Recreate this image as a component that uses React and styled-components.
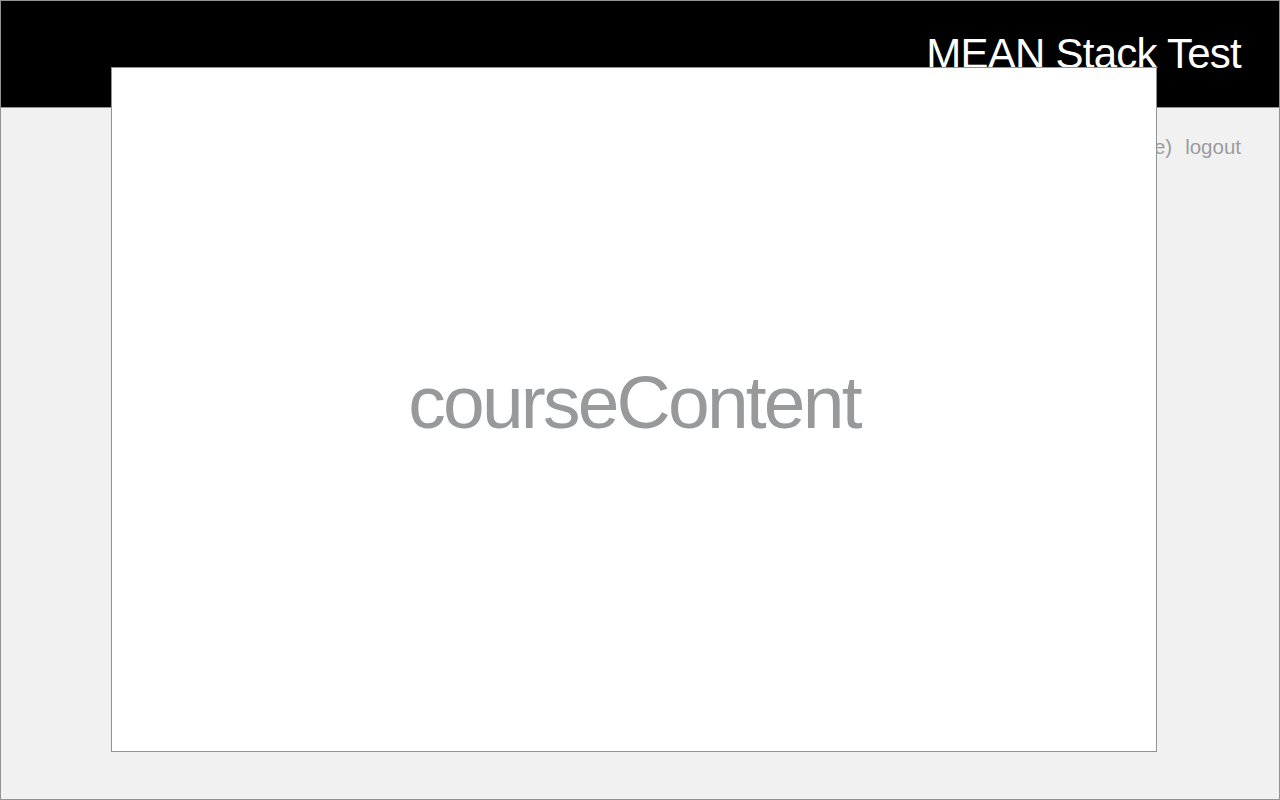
import React from 'react';
import styled, { createGlobalStyle } from 'styled-components';

const GlobalStyle = createGlobalStyle`
  html, body {
    margin: 0;
    padding: 0;
  }
  body {
    font-family: 'Liberation Sans', Arial, Helvetica, sans-serif;
  }
`;

const Page = styled.div`
  position: relative;
  box-sizing: border-box;
  width: 1280px;
  height: 800px;
  border: 1px solid #939393;
  background: #f1f1f1;
  overflow: hidden;
`;

const Header = styled.header`
  display: flex;
  justify-content: flex-end;
  align-items: flex-start;
  height: 106px;
  padding-right: 38px;
  background: #000;
  border-bottom: 1px solid #939393;
`;

const Title = styled.h1`
  margin: 29px 0 0;
  font-size: 42px;
  font-weight: 400;
  letter-spacing: -0.75px;
  line-height: 48px;
  color: #fff;
`;

const UserBar = styled.nav`
  display: flex;
  justify-content: flex-end;
  gap: 13px;
  padding: 27px 38px 0 0;
  font-size: 20.5px;
  line-height: 24px;
  color: #9a9c9e;
`;

const UserLink = styled.span`
  cursor: pointer;
`;

// dialog lies over the header and the page
const Modal = styled.div`
  position: absolute;
  left: 110px;
  top: 66px;
  box-sizing: border-box;
  width: 1046px;
  height: 685px;
  display: flex;
  align-items: center;
  justify-content: center;
  background: #fff;
  border: 1px solid #939393;
`;

const ModalText = styled.div`
  margin-top: -16px;
  font-size: 75px;
  letter-spacing: -2.8px;
  color: #97999b;
`;

function App() {
  return (
    <>
      <GlobalStyle />
      <Page>
        <Header>
          <Title>MEAN Stack Test</Title>
        </Header>
        <UserBar>
          <span>Signed in (role: course)</span>
          <UserLink>logout</UserLink>
        </UserBar>
        <Modal>
          <ModalText>courseContent</ModalText>
        </Modal>
      </Page>
    </>
  );
}

export default App;
